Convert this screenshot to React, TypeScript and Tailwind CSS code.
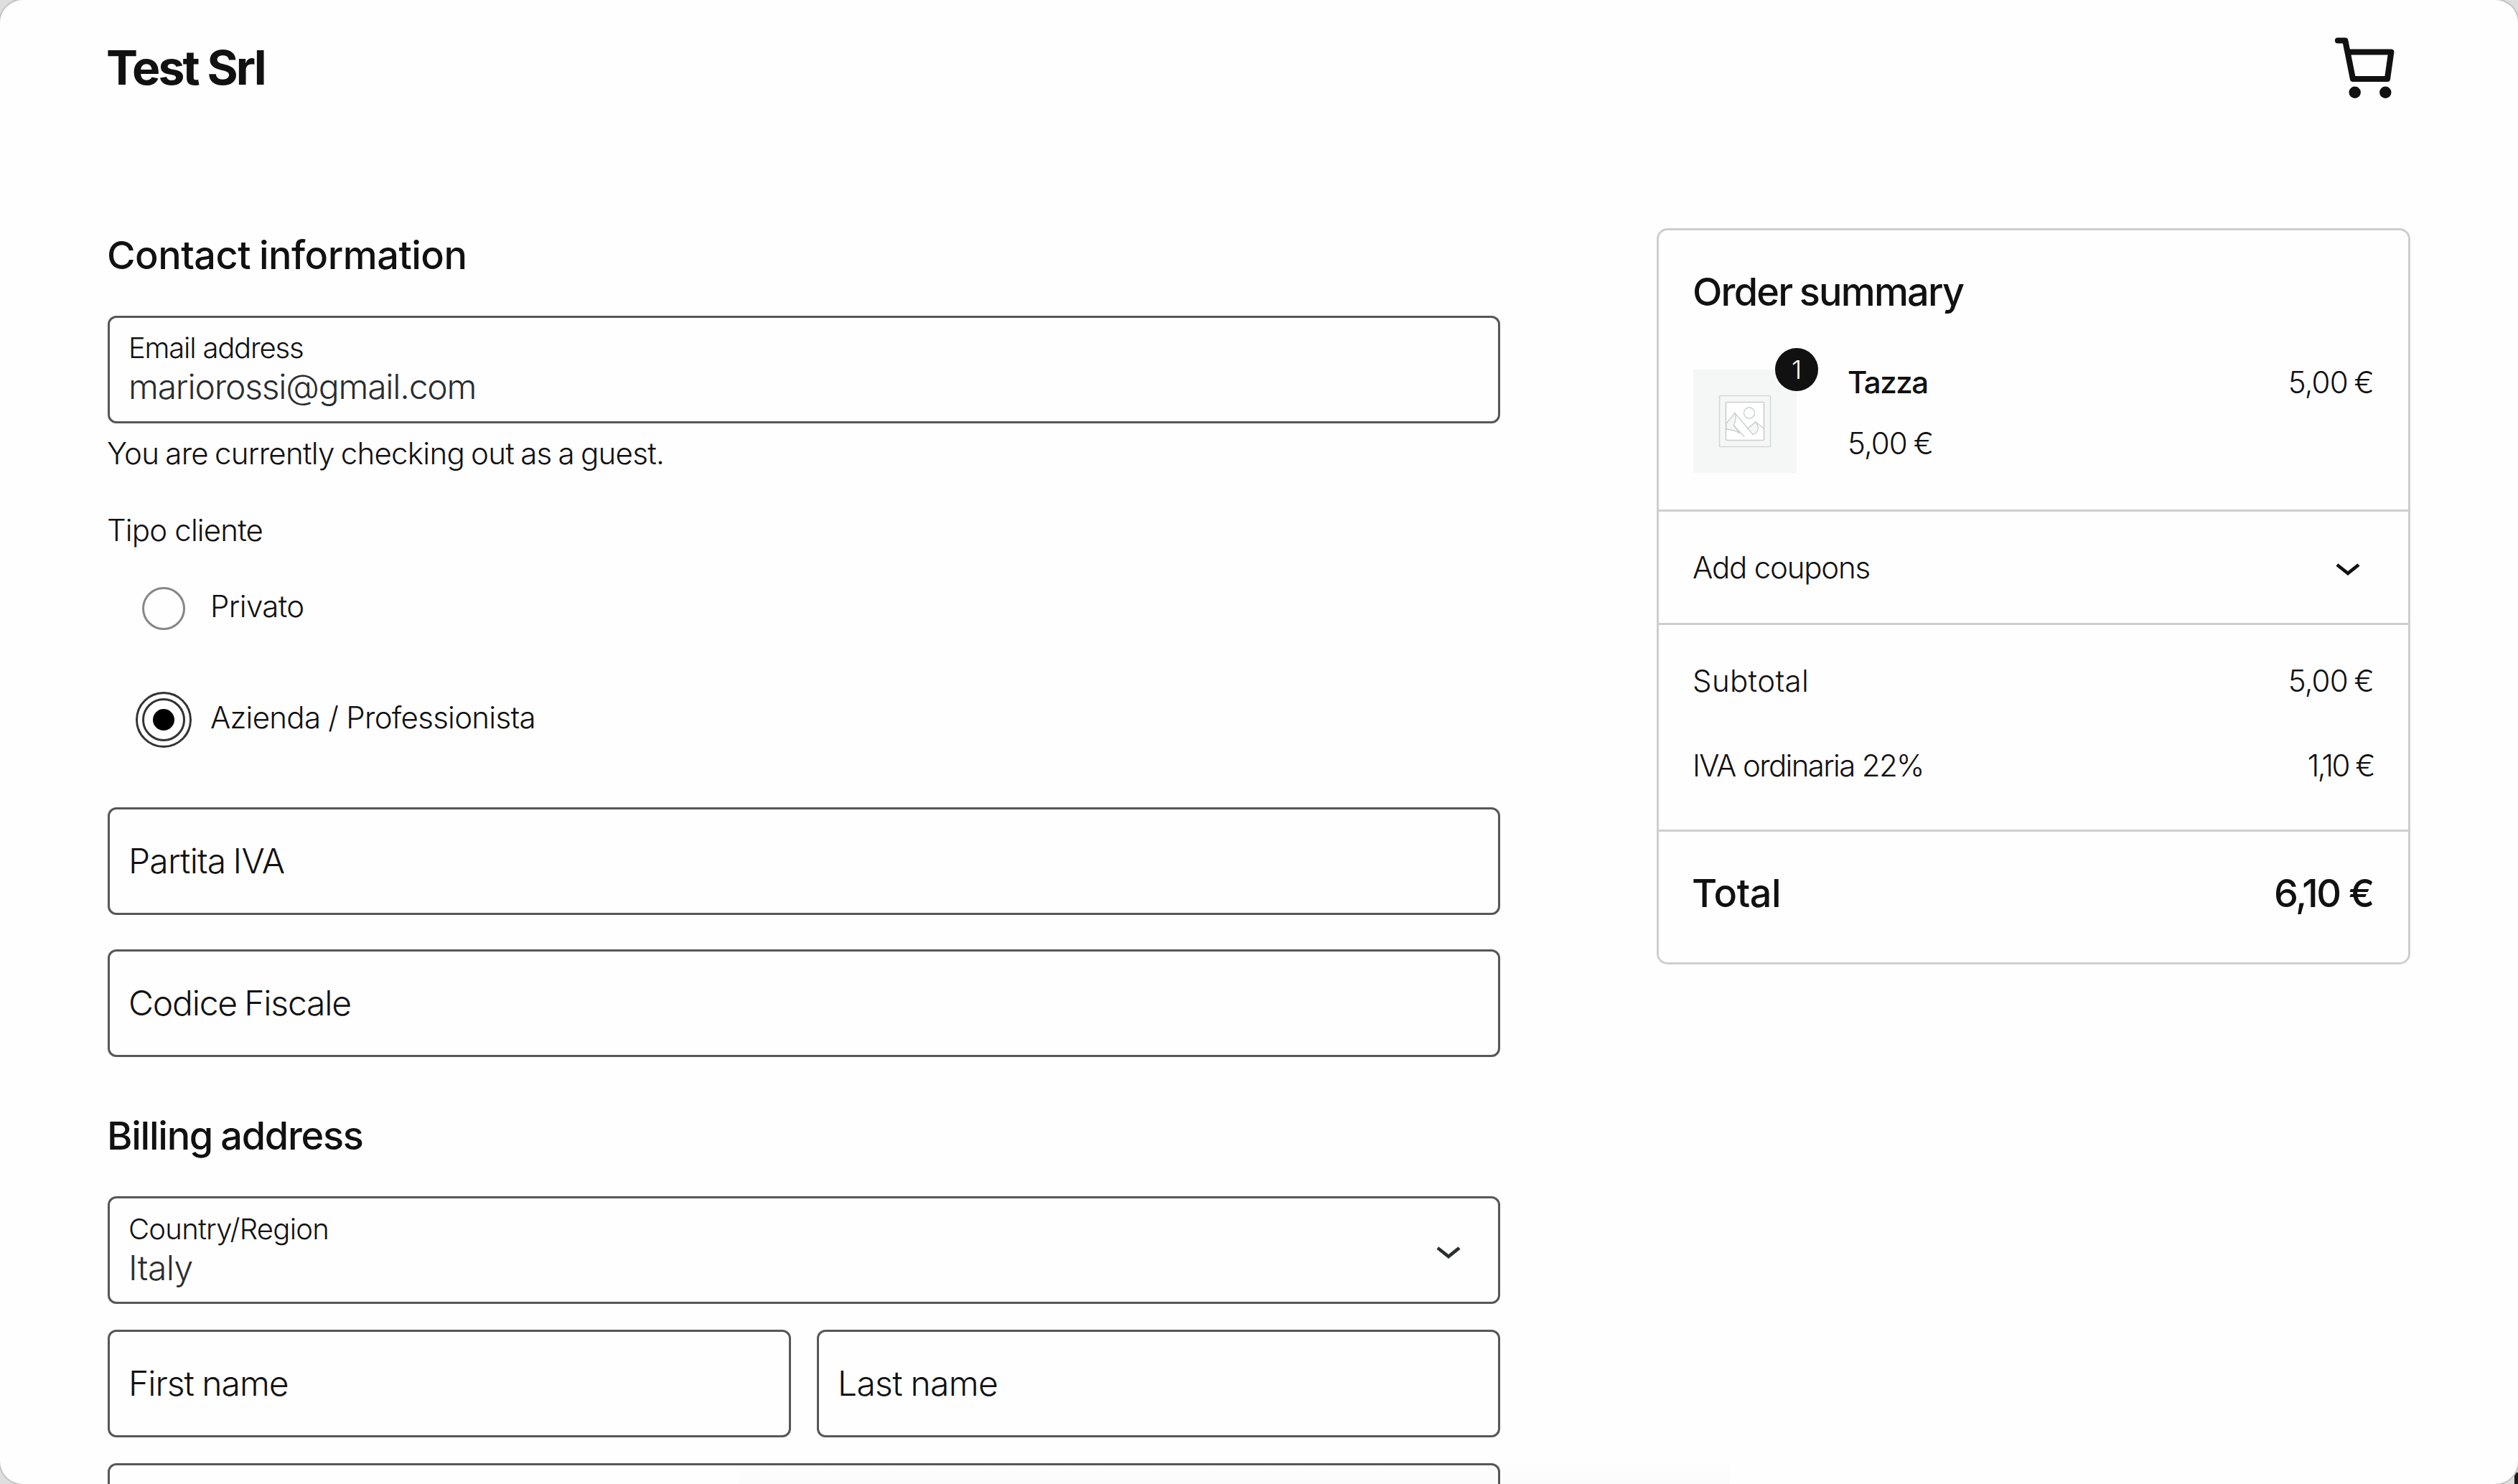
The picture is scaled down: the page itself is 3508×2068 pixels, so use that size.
import type { ReactNode } from "react";

function CartIcon() {
  return (
    <svg className="mt-[1px] h-[90px] w-[90px]" viewBox="3250 50 90 90" fill="none" aria-hidden="true">
      <path
        d="M3257 56.5H3267.3L3278 110H3326L3331.3 72.5H3271"
        stroke="#111111"
        strokeWidth="8.2"
        strokeLinecap="round"
        strokeLinejoin="round"
      />
      <circle cx="3280.7" cy="128.7" r="8.2" fill="#111111" />
      <circle cx="3323.3" cy="128.7" r="8.2" fill="#111111" />
    </svg>
  );
}

function Chevron({ className }: { className: string }) {
  return (
    <svg className={`size-[72px] shrink-0 ${className}`} viewBox="0 0 24 24" fill="currentColor" aria-hidden="true">
      <path d="M17.5 11.6L12 16l-5.5-4.4.9-1.2L12 14l4.5-3.6 1 1.2z" />
    </svg>
  );
}

function Placeholder() {
  return (
    <svg className="size-[144px] bg-[#f5f7f7]" viewBox="0 0 144 144" fill="none" stroke="#cbcdcd" strokeWidth="1.3" aria-hidden="true">
      <rect x="36.5" y="36.5" width="71" height="71" rx="1" stroke="#d6d8d8" strokeWidth="1.6" />
      <rect x="45.5" y="45.5" width="53" height="53" rx="1" fill="#ffffff" strokeWidth="1.6" />
      <path d="M46 75L58 60.5C60.5 67 59.500 72 56 77.500L65 89C59.500 85.500 53 83.500 46 83Z" fill="#f5f7f7" />
      <path d="M58 60.5L76 82L87 73L98 82M56 77.5L71.500 94" />
      <path d="M87 73C92 80 92 86 83.500 91L76 82Z" fill="#f5f7f7" />
      <circle cx="78" cy="60.500" r="7.500" />
    </svg>
  );
}

function SectionTitle({ className, children }: { className: string; children: ReactNode }) {
  return <h2 className={`-ml-[1px] text-[54px] leading-[75px] font-[540] ${className}`}>{children}</h2>;
}

function Field({ className, children }: { className?: string; children?: ReactNode }) {
  return (
    <div className={`flex h-[150px] items-center rounded-[12px] border-[3px] border-[#575757] pl-[26px] text-[48px] leading-[60px] ${className ?? ""}`}>
      {children}
    </div>
  );
}

function FilledField({ className, label, value }: { className: string; label: ReactNode; value: ReactNode }) {
  return (
    <div className={`flex grow flex-col self-start ${className}`}>
      <div className="text-[40px] leading-[48px]">{label}</div>
      <div className="text-[48px] leading-[60px] text-[#2b2d2f]">{value}</div>
    </div>
  );
}

function Header() {
  return (
    <header className="flex h-[188px] items-center justify-between pr-[168px] pl-[148px]">
      <h1 className="text-[66px] leading-[80px] font-[650] tracking-[-2.9px]">Test Srl</h1>
      <CartIcon />
    </header>
  );
}

function CheckoutForm() {
  return (
    <form className="flex w-[1940px] shrink-0 flex-col">
      <SectionTitle className="tracking-[-0.5px] [word-spacing:-2px]">Contact information</SectionTitle>
      <Field className="mt-[47px]">
        <FilledField
          className="pt-[18px]"
          label={<span className="tracking-[-1.2px]">Email address</span>}
          value={<span className="tracking-[-1.2px]">mariorossi@gmail.com</span>}
        />
      </Field>
      <p className="-ml-[1px] mt-[15px] text-[42px] leading-[54px] tracking-[-0.72px] [word-spacing:-2px]">
        You are currently checking out as a guest.
      </p>
      <p className="-ml-[1px] mt-[53px] text-[42px] leading-[54px] tracking-[-0.85px]">Tipo cliente</p>
      <label className="mt-[52px] flex h-[60px] items-center gap-[35px] pl-12 text-[42px] leading-[54px]">
        <span className="size-[60px] rounded-full border-[3px] border-[#878787]" />
        <span className="mb-[6px] tracking-[-0.6px]">Privato</span>
      </label>
      <label className="mt-[95px] flex h-[60px] items-center gap-[35px] pl-12 text-[42px] leading-[54px]">
        <span className="flex size-[60px] items-center justify-center rounded-full border-[3px] border-[#333333] outline-[3px] outline-offset-[6px] outline-[#333333]">
          <span className="size-[30px] rounded-full bg-black" />
        </span>
        <span className="mb-[6px] tracking-[-0.72px]">Azienda / Professionista</span>
      </label>
      <Field className="mt-[92px]">
        <span className="tracking-[-0.8px] [word-spacing:-2.5px]">Partita IVA</span>
      </Field>
      <Field className="mt-12">
        <span className="tracking-[-1.2px] [word-spacing:-2px]">Codice Fiscale</span>
      </Field>
      <SectionTitle className="mt-[72px] tracking-[-1.25px] [word-spacing:-2px]">Billing address</SectionTitle>
      <Field className="mt-[47px] pr-[33px]">
        <FilledField
          className="pt-[19px]"
          label={<span className="tracking-[-0.75px]">Country/Region</span>}
          value={<span className="tracking-[-0.6px]">Italy</span>}
        />
        <Chevron className="text-[#2b2d2f]" />
      </Field>
      <div className="mt-9 grid grid-cols-2 gap-9">
        <Field>
          <span className="tracking-[-1px] [word-spacing:-1px]">First name</span>
        </Field>
        <Field>
          <span className="tracking-[-0.7px] [word-spacing:-1px]">Last name</span>
        </Field>
      </div>
      <Field className="mt-9 shrink-0" />
    </form>
  );
}

function OrderSummary() {
  return (
    <aside className="w-[1050px] shrink-0 divide-y-[3px] divide-[#cecece] self-start rounded-[15px] border-[3px] border-[#cecece] text-[42px] leading-[54px]">
      <section className="h-[392px] px-12 pt-[56px]">
        <h2 className="-ml-[1px] text-[54px] leading-[60px] font-[540] tracking-[-1.8px] [word-spacing:-2px]">Order summary</h2>
        <div className="mt-[63px] flex leading-[66px]">
          <div className="relative mt-[15px] size-[144px]">
            <Placeholder />
            <span className="absolute -top-[30px] -right-[30px] flex size-[60px] items-center justify-center rounded-full bg-[#111111] text-[36px] leading-[60px] text-white">
              1
            </span>
          </div>
          <div className="ml-[71px] flex grow flex-col">
            <div className="font-medium tracking-[-1.5px]">Tazza</div>
            <div className="mt-[19px] tracking-[-0.9px] [word-spacing:-2px]">5,00 €</div>
          </div>
          <div className="tracking-[-0.9px] [word-spacing:-2px]">5,00 €</div>
        </div>
      </section>
      <section className="flex h-[158px] items-center justify-between pr-12 pl-[47px]">
        <span className="tracking-[-1.2px]">Add coupons</span>
        <Chevron className="-mt-[2px] text-[#111111]" />
      </section>
      <section className="h-[288px] pt-[51px] pr-12 pl-[47px]">
        <div className="flex justify-between">
          <span className="tracking-[0.35px]">Subtotal</span>
          <span className="tracking-[-0.9px] [word-spacing:-2px]">5,00 €</span>
        </div>
        <div className="mt-16 flex justify-between">
          <span className="tracking-[-1.65px]">IVA ordinaria 22%</span>
          <span className="tracking-[-2.5px]">1,10 €</span>
        </div>
      </section>
      <section className="flex h-[182px] justify-between pt-[56px] pr-[49px] pl-[46px] text-[54px] leading-[60px] font-[540]">
        <span className="tracking-[-0.5px]">Total</span>
        <span className="tracking-[-2.3px]">6,10 €</span>
      </section>
    </aside>
  );
}

export default function App() {
  return (
    <div className="relative h-[2068px] w-[3508px] overflow-hidden bg-[#dedede]">
      <div className="absolute right-0 bottom-0 h-4 w-[5px] bg-[#1c1c1c]" />
      <div className="relative h-full overflow-hidden rounded-[32px] bg-[#fefefe] font-[Inter,sans-serif] font-[340] text-[#111111] shadow-[0_0_0_2px_#c4c4c4]">
        <Header />
        <main className="flex justify-between pt-[130px] pr-[150px] pl-[150px]">
          <CheckoutForm />
          <OrderSummary />
        </main>
        <div className="pointer-events-none absolute bottom-0 left-[1030px] h-[34px] w-[1380px] bg-linear-to-b from-transparent to-black/[0.012]" />
      </div>
    </div>
  );
}
